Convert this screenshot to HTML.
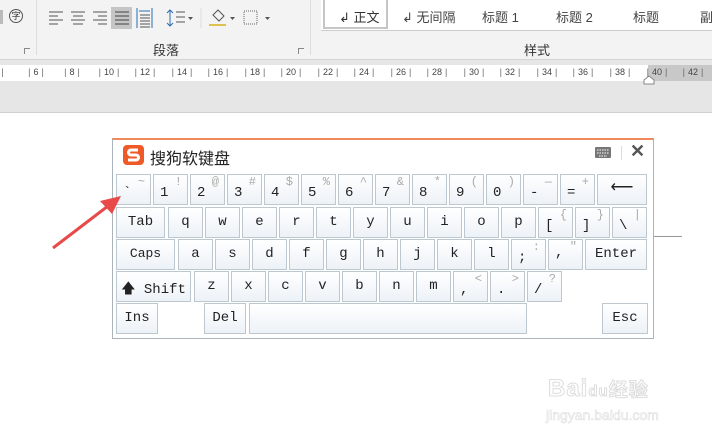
<!DOCTYPE html>
<html><head><meta charset="utf-8"><style>
*{margin:0;padding:0;box-sizing:border-box}
body{width:712px;height:437px;overflow:hidden;background:#fff;position:relative;font-family:"Liberation Sans","Noto Sans CJK SC",sans-serif}
.a{position:absolute}
.k{position:absolute;height:31px;border:1px solid #bcc7cf;background:linear-gradient(#ffffff,#edf2f7);font-family:"Liberation Mono","Noto Sans CJK SC",monospace;font-size:14px;color:#222}
.k .m{position:absolute;left:6px;bottom:3px}
.k .s{position:absolute;right:5px;top:0px;font-size:12px;color:#aaa}
.k .c{position:absolute;left:0;right:0;top:6px;text-align:center}
.t{font-size:12px;color:#333;position:absolute}
.r{position:absolute;top:0;width:30px;margin-left:-15px;text-align:center}
.r i{font-style:normal;color:#666;padding:0 3px}
</style></head><body>
<!-- ribbon -->
<div class="a" style="left:0;top:0;width:712px;height:59px;background:#f3f3f3"></div>
<div class="a" style="left:0;top:59px;width:712px;height:1px;background:#d4d4d4"></div>
<div class="a" style="left:0;top:10px;width:3px;height:14px;background:#bbb"></div>
<div class="a" style="left:9px;top:9px;width:14px;height:14px;border:1px solid #555;border-radius:50%;font-size:9px;text-align:center;line-height:12px;color:#333">字</div>
<div class="a" style="left:36px;top:0;width:1px;height:55px;background:#ddd"></div>
<svg class="a" style="left:0;top:0" width="330" height="60">
<g stroke="#555" stroke-width="1">
<path d="M49 12h14M49 16h9M49 20h14M49 24h9"/>
<path d="M71 12h14M73 16h10M71 20h14M73 24h10"/>
<path d="M93 12h14M98 16h9M93 20h14M98 24h9"/>
</g>
<rect x="111" y="7" width="21" height="22" fill="#c5c5c5"/>
<g stroke="#444"><path d="M115 12h14M115 16h14M115 20h14M115 24h14"/></g>
<g stroke="#2b6cb0"><path d="M137 8v20M152 8v20M139 11h11"/></g>
<g stroke="#555"><path d="M140 15h10M140 18h10M140 21h10M140 24h10M140 27h10"/></g>
<path d="M170 10v16M167 13l3-3 3 3M167 23l3 3 3-3" stroke="#2b6cb0" fill="none"/>
<path d="M176 12h9M176 17h9M176 22h9" stroke="#555"/>
<path d="M188 17h5l-2.5 3z" fill="#555"/>
<path d="M201 8v20" stroke="#ddd"/>
<path d="M213 15l5-5 6 6-5 5z" stroke="#555" fill="none"/>
<path d="M209 25h17" stroke="#e0c050" stroke-width="2"/>
<path d="M230 17h5l-2.5 3z" fill="#555"/>
<rect x="244" y="11" width="13" height="13" fill="none" stroke="#666" stroke-dasharray="1 1"/>
<path d="M265 17h5l-2.5 3z" fill="#555"/>
</svg>
<div class="a" style="left:310px;top:0;width:1px;height:55px;background:#ddd"></div>
<div class="a" style="left:321px;top:0;width:391px;height:31px;background:#fff;border-bottom:1px solid #ccc"></div>
<div class="a" style="left:323px;top:0;width:65px;height:29px;border:2px solid #c6c6c6;border-top:none"></div>
<div class="t" style="left:339px;top:7px;font-size:13px">↲ 正文</div>
<div class="t" style="left:402px;top:7px;font-size:13px;color:#444">↲ 无间隔</div>
<div class="t" style="left:482px;top:7px;font-size:13px;color:#444">标题 1</div>
<div class="t" style="left:556px;top:7px;font-size:13px;color:#444">标题 2</div>
<div class="t" style="left:633px;top:7px;font-size:13px;color:#444">标题</div>
<div class="t" style="left:700px;top:7px;font-size:13px;color:#444">副</div>
<div class="t" style="left:153px;top:40px;font-size:13px">段落</div>
<div class="t" style="left:524px;top:40px;font-size:13px">样式</div>
<div class="a" style="left:24px;top:48px;width:6px;height:6px;border-left:1px solid #888;border-top:1px solid #888"></div>
<div class="a" style="left:298px;top:48px;width:6px;height:6px;border-left:1px solid #888;border-top:1px solid #888"></div>
<!-- ruler area -->
<div class="a" style="left:0;top:60px;width:712px;height:52px;background:#e6e6e6"></div>
<div class="a" style="left:0;top:65px;width:648px;height:16px;background:#fff"></div>
<div class="a" style="left:648px;top:65px;width:64px;height:16px;background:#c8c8c8"></div>
<svg class="a" style="left:643px;top:75px" width="12" height="10"><path d="M1 9V5l5-4 5 4v4z" fill="#fff" stroke="#888"/></svg>
<div class="a" style="left:0;top:67px;width:712px;height:12px;font-size:9px;color:#444;white-space:nowrap;font-family:'Liberation Sans',sans-serif">
<span class="r" style="left:0px">4<i>|</i></span>
<span class="r" style="left:36px"><i>|</i>6<i>|</i></span>
<span class="r" style="left:72px"><i>|</i>8<i>|</i></span>
<span class="r" style="left:109px"><i>|</i>10<i>|</i></span>
<span class="r" style="left:145px"><i>|</i>12<i>|</i></span>
<span class="r" style="left:182px"><i>|</i>14<i>|</i></span>
<span class="r" style="left:218px"><i>|</i>16<i>|</i></span>
<span class="r" style="left:255px"><i>|</i>18<i>|</i></span>
<span class="r" style="left:291px"><i>|</i>20<i>|</i></span>
<span class="r" style="left:328px"><i>|</i>22<i>|</i></span>
<span class="r" style="left:364px"><i>|</i>24<i>|</i></span>
<span class="r" style="left:401px"><i>|</i>26<i>|</i></span>
<span class="r" style="left:437px"><i>|</i>28<i>|</i></span>
<span class="r" style="left:474px"><i>|</i>30<i>|</i></span>
<span class="r" style="left:510px"><i>|</i>32<i>|</i></span>
<span class="r" style="left:547px"><i>|</i>34<i>|</i></span>
<span class="r" style="left:583px"><i>|</i>36<i>|</i></span>
<span class="r" style="left:620px"><i>|</i>38<i>|</i></span>
<span class="r" style="left:657px"><i>|</i>40<i>|</i></span>
<span class="r" style="left:693px"><i>|</i>42<i>|</i></span>
</div>
<div class="a" style="left:0;top:112px;width:712px;height:1px;background:#d0d0d0"></div>
<div class="a" style="left:654px;top:236px;width:28px;height:1px;background:#999"></div>
<!-- keyboard window -->
<div class="a" style="left:112px;top:138px;width:542px;height:201px;background:#fff;border:1px solid #a9b4bc;border-top:2px solid #f08a5d"></div>
<svg class="a" style="left:123px;top:145px" width="21" height="20"><rect x="0" y="0" width="21" height="20" rx="4" fill="#ef5a29"/><path d="M15 5H8a2.5 2.5 0 0 0 0 5h5a2.5 2.5 0 0 1 0 5H5" stroke="#fff" stroke-width="3" fill="none"/></svg>
<div class="a" style="left:150px;top:145px;font-size:16px;color:#222">搜狗软键盘</div>
<svg class="a" style="left:594px;top:145px" width="20" height="16"><rect x="1" y="2" width="16" height="11" rx="1" fill="#777"/><path d="M3 5h12M3 8h12M5 11h8" stroke="#fff" stroke-dasharray="1.5 1"/></svg>
<div class="a" style="left:621px;top:146px;width:1px;height:14px;background:#ddd"></div>
<div class="a" style="left:630px;top:141px;font-size:18px;color:#555;font-weight:bold">✕</div>
<!-- row1 -->
<div class="k" style="left:116px;top:174px;width:35px"><span class="m">`</span><span class="s">~</span></div>
<div class="k" style="left:153px;top:174px;width:35px"><span class="m">1</span><span class="s">!</span></div>
<div class="k" style="left:190px;top:174px;width:35px"><span class="m">2</span><span class="s">@</span></div>
<div class="k" style="left:227px;top:174px;width:35px"><span class="m">3</span><span class="s">#</span></div>
<div class="k" style="left:264px;top:174px;width:35px"><span class="m">4</span><span class="s">$</span></div>
<div class="k" style="left:301px;top:174px;width:35px"><span class="m">5</span><span class="s">%</span></div>
<div class="k" style="left:338px;top:174px;width:35px"><span class="m">6</span><span class="s">^</span></div>
<div class="k" style="left:375px;top:174px;width:35px"><span class="m">7</span><span class="s">&amp;</span></div>
<div class="k" style="left:412px;top:174px;width:35px"><span class="m">8</span><span class="s">*</span></div>
<div class="k" style="left:449px;top:174px;width:35px"><span class="m">9</span><span class="s">(</span></div>
<div class="k" style="left:486px;top:174px;width:35px"><span class="m">0</span><span class="s">)</span></div>
<div class="k" style="left:523px;top:174px;width:35px"><span class="m">-</span><span class="s">—</span></div>
<div class="k" style="left:560px;top:174px;width:35px"><span class="m">=</span><span class="s">+</span></div>
<div class="k" style="left:597px;top:174px;width:50px"><span class="c" style="top:2px;font-size:16px">⟵</span></div>
<!-- row2 -->
<div class="k" style="left:116px;top:207px;width:49px"><span class="c">Tab</span></div>
<div class="k" style="left:168px;top:207px;width:35px"><span class="c">q</span></div>
<div class="k" style="left:205px;top:207px;width:35px"><span class="c">w</span></div>
<div class="k" style="left:242px;top:207px;width:35px"><span class="c">e</span></div>
<div class="k" style="left:279px;top:207px;width:35px"><span class="c">r</span></div>
<div class="k" style="left:316px;top:207px;width:35px"><span class="c">t</span></div>
<div class="k" style="left:353px;top:207px;width:35px"><span class="c">y</span></div>
<div class="k" style="left:390px;top:207px;width:35px"><span class="c">u</span></div>
<div class="k" style="left:427px;top:207px;width:35px"><span class="c">i</span></div>
<div class="k" style="left:464px;top:207px;width:35px"><span class="c">o</span></div>
<div class="k" style="left:501px;top:207px;width:35px"><span class="c">p</span></div>
<div class="k" style="left:538px;top:207px;width:35px"><span class="m">[</span><span class="s">{</span></div>
<div class="k" style="left:575px;top:207px;width:35px"><span class="m">]</span><span class="s">}</span></div>
<div class="k" style="left:612px;top:207px;width:35px"><span class="m">\</span><span class="s">|</span></div>
<!-- row3 -->
<div class="k" style="left:116px;top:239px;width:59px"><span class="c" style="font-size:13px">Caps</span></div>
<div class="k" style="left:178px;top:239px;width:35px"><span class="c">a</span></div>
<div class="k" style="left:215px;top:239px;width:35px"><span class="c">s</span></div>
<div class="k" style="left:252px;top:239px;width:35px"><span class="c">d</span></div>
<div class="k" style="left:289px;top:239px;width:35px"><span class="c">f</span></div>
<div class="k" style="left:326px;top:239px;width:35px"><span class="c">g</span></div>
<div class="k" style="left:363px;top:239px;width:35px"><span class="c">h</span></div>
<div class="k" style="left:400px;top:239px;width:35px"><span class="c">j</span></div>
<div class="k" style="left:437px;top:239px;width:35px"><span class="c">k</span></div>
<div class="k" style="left:474px;top:239px;width:35px"><span class="c">l</span></div>
<div class="k" style="left:511px;top:239px;width:35px"><span class="m">;</span><span class="s">:</span></div>
<div class="k" style="left:548px;top:239px;width:35px"><span class="m" style="bottom:8px">,</span><span class="s">"</span></div>
<div class="k" style="left:585px;top:239px;width:62px"><span class="c">Enter</span></div>
<!-- row4 -->
<div class="k" style="left:116px;top:271px;width:75px"><span class="c">&#129093; Shift</span></div>
<div class="k" style="left:194px;top:271px;width:35px"><span class="c">z</span></div>
<div class="k" style="left:231px;top:271px;width:35px"><span class="c">x</span></div>
<div class="k" style="left:268px;top:271px;width:35px"><span class="c">c</span></div>
<div class="k" style="left:305px;top:271px;width:35px"><span class="c">v</span></div>
<div class="k" style="left:342px;top:271px;width:35px"><span class="c">b</span></div>
<div class="k" style="left:379px;top:271px;width:35px"><span class="c">n</span></div>
<div class="k" style="left:416px;top:271px;width:35px"><span class="c">m</span></div>
<div class="k" style="left:453px;top:271px;width:35px"><span class="m">,</span><span class="s">&lt;</span></div>
<div class="k" style="left:490px;top:271px;width:35px"><span class="m">.</span><span class="s">&gt;</span></div>
<div class="k" style="left:527px;top:271px;width:35px"><span class="m">/</span><span class="s">?</span></div>
<!-- row5 -->
<div class="k" style="left:116px;top:303px;width:42px"><span class="c">Ins</span></div>
<div class="k" style="left:204px;top:303px;width:42px"><span class="c">Del</span></div>
<div class="k" style="left:249px;top:303px;width:278px"></div>
<div class="k" style="left:602px;top:303px;width:46px"><span class="c">Esc</span></div>
<!-- arrow -->
<svg class="a" style="left:0;top:0" width="712" height="437"><path d="M53 248L108 206" stroke="#e84a4a" stroke-width="3"/><path d="M121 196L100 201L112 214z" fill="#e84a4a"/></svg>
<!-- watermark -->
<div class="a" style="left:548px;top:375px;font-size:24px;font-weight:bold;color:#fff;-webkit-text-stroke:1px #ddd;letter-spacing:1px">Bai<span style="font-size:15px">du</span><span style="font-family:'Noto Sans CJK SC',sans-serif;font-size:19px">经验</span></div>
<div class="a" style="left:546px;top:407px;font-size:14px;color:#fff;-webkit-text-stroke:0.6px #ddd">jingyan.baidu.com</div>
</body></html>
